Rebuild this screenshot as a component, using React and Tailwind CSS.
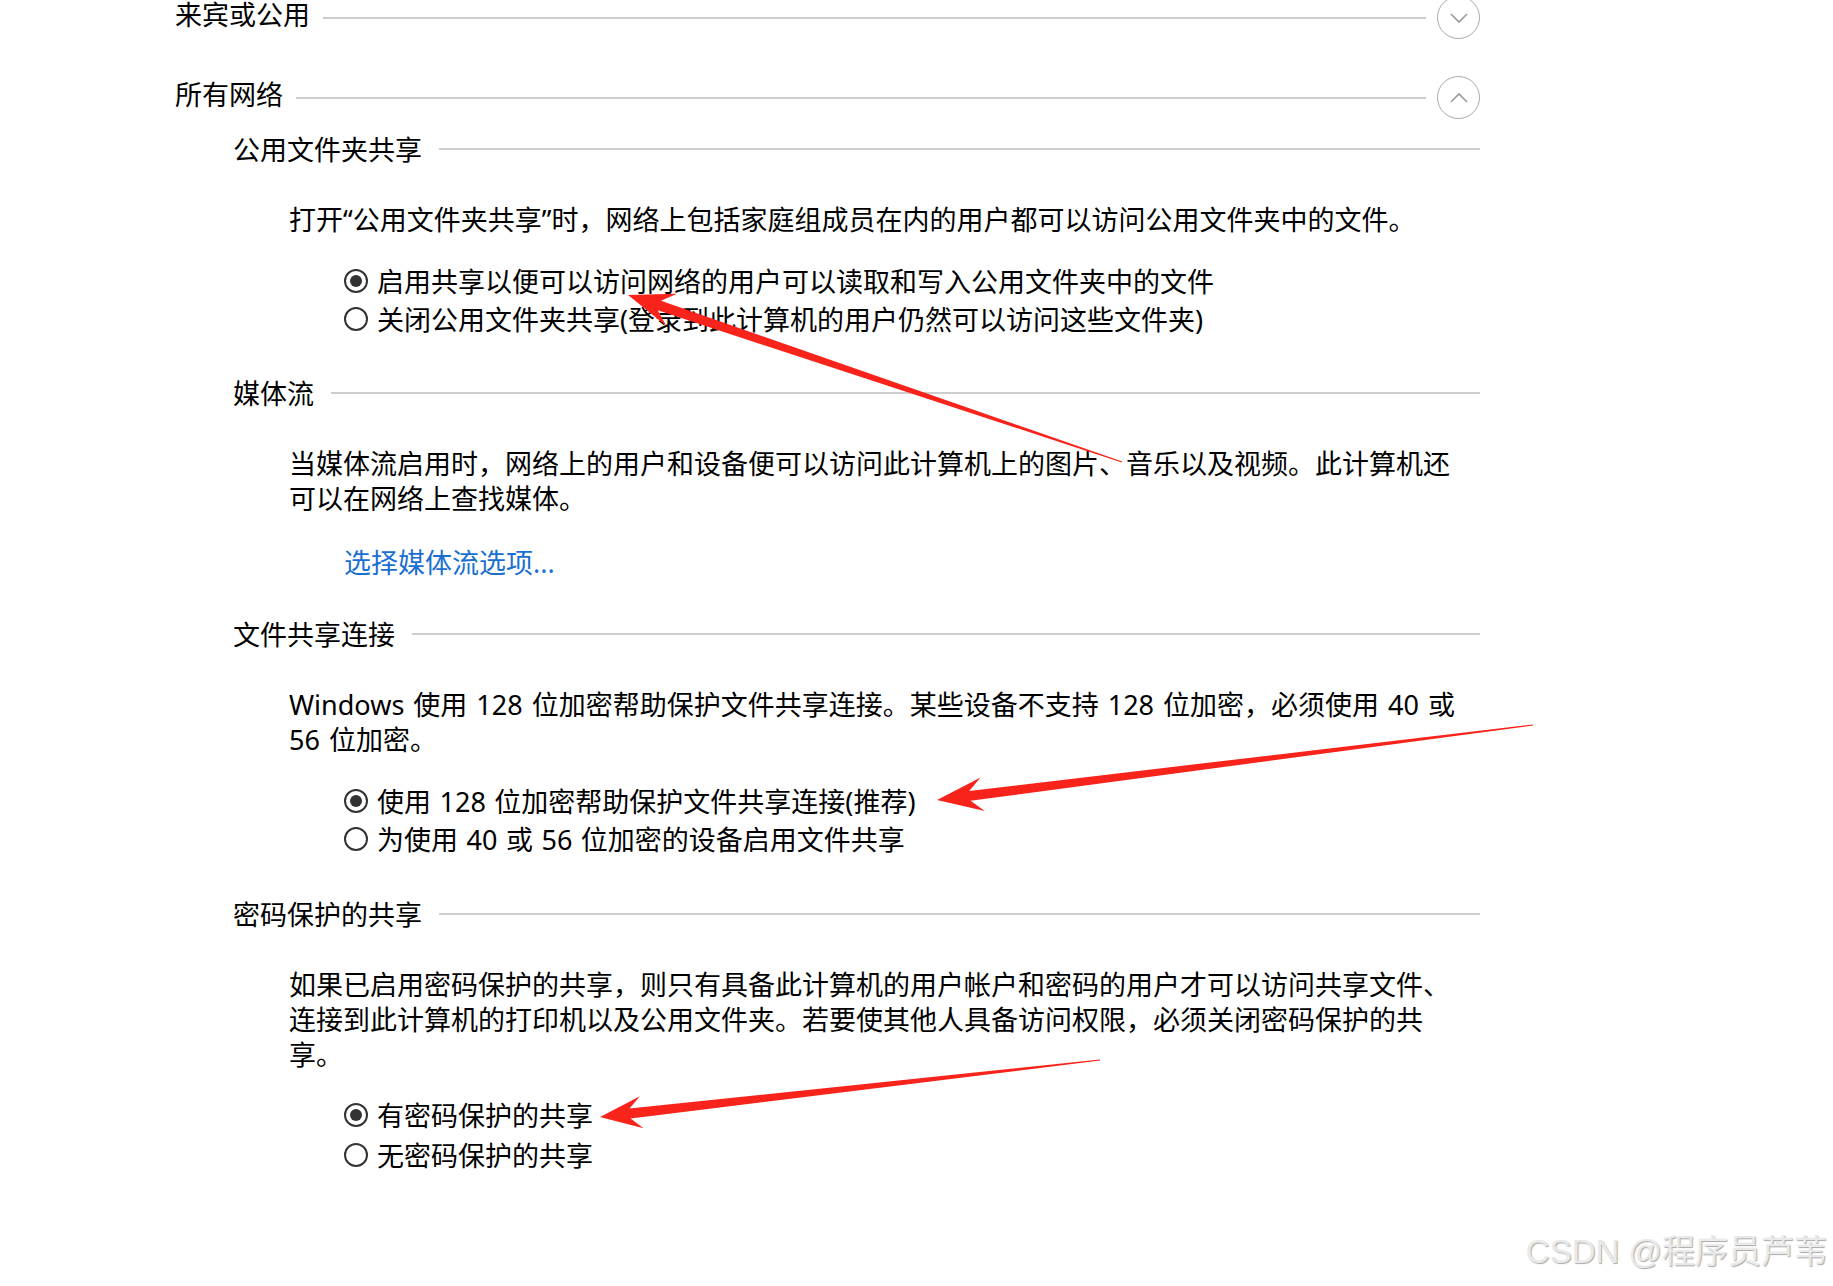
import React from "react";

// tapered red annotation arrow, tail -> tip
const Arrow = ({ tail, tip, len = 46, half = 17, neck = 5 }) => {
    const dx = tip[0] - tail[0];
    const dy = tip[1] - tail[1];
    const d = Math.hypot(dx, dy);
    const ux = dx / d, uy = dy / d;
    const nx = -uy, ny = ux;
    const at = (back, side) => [tip[0] - ux * back + nx * side, tip[1] - uy * back + ny * side];
    const pts = [
        tip,
        at(len, half),
        at(len * 0.72, neck),
        [tail[0] + nx * 0.6, tail[1] + ny * 0.6],
        [tail[0] - nx * 0.6, tail[1] - ny * 0.6],
        at(len * 0.72, -neck),
        at(len, -half),
    ];
    return <polygon points={pts.map((p) => p.join(",")).join(" ")} fill="#f8231a" />;
};

const GroupHeader = ({ title, open, className = "" }) => (
    <div className={`flex items-center h-[43px] ${className}`}>
        <span className="text-[27px] leading-[35px] -mt-[6px]">{title}</span>
        <div className="flex-1 h-[2px] bg-[#cdcdcd] ml-[13px] mr-[11px]" />
        <div className="w-[43px] h-[43px] rounded-full border border-[#a9a9a9] flex items-center justify-center">
            <svg width="20" height="12" viewBox="0 0 20 12" fill="none" stroke="#9a9a9a" strokeWidth="1.6">
                {open ? <path d="M2 10 L10 2 L18 10" /> : <path d="M2 2 L10 10 L18 2" />}
            </svg>
        </div>
    </div>
);

const SectionHeader = ({ title, className = "" }) => (
    <div className={`flex items-center h-[36px] pl-[58px] ${className}`}>
        <span className="text-[27px] leading-[36px]">{title}</span>
        <div className="flex-1 h-[2px] bg-[#cdcdcd] ml-[17px] mt-[-3px]" />
    </div>
);

const Para = ({ children, className = "" }) => (
    <p className={`pl-[114px] w-[1285px] text-[27px] leading-[35px] ${className}`}>{children}</p>
);

const Radio = ({ checked, label, tall }) => (
    <div className={`flex items-center pl-[169px] ${tall ? "h-[40px]" : "h-[38px]"}`}>
        <div className="w-[24px] h-[24px] rounded-full border-[2.5px] border-[#333] flex items-center justify-center shrink-0">
            {checked && <div className="w-[12px] h-[12px] rounded-full bg-[#333]" />}
        </div>
        <span className="ml-[9px] text-[27px] leading-[35px]">{label}</span>
    </div>
);

export default function App() {
    return (
        <div className="relative min-h-[1286px] bg-white text-black overflow-hidden [word-spacing:1.5px] font-['Noto_Sans','Noto_Sans_CJK_SC',sans-serif]">
            <div className="w-[1480px] pl-[175px]">
                <GroupHeader title="来宾或公用" className="-mt-[4px]" />
                <GroupHeader title="所有网络" open className="mt-[37px]" />

                {/* 公用文件夹共享 */}
                <SectionHeader title="公用文件夹共享" className="mt-[13px]" />
                <Para className="mt-[34px]">
                    打开“公用文件夹共享”时，网络上包括家庭组成员在内的用户都可以访问公用文件夹中的文件。
                </Para>
                <div className="mt-[25px]">
                    <Radio checked label="启用共享以便可以访问网络的用户可以读取和写入公用文件夹中的文件" />
                    <Radio label="关闭公用文件夹共享(登录到此计算机的用户仍然可以访问这些文件夹)" />
                </div>

                {/* 媒体流 */}
                <SectionHeader title="媒体流" className="mt-[38px]" />
                <Para className="mt-[34px]">
                    当媒体流启用时，网络上的用户和设备便可以访问此计算机上的图片、音乐以及视频。此计算机还可以在网络上查找媒体。
                </Para>
                <div className="mt-[29px] pl-[169px]">
                    <a href="#" className="text-[27px] leading-[35px] text-[#1a6fd0]">选择媒体流选项...</a>
                </div>

                {/* 文件共享连接 */}
                <SectionHeader title="文件共享连接" className="mt-[37px]" />
                <Para className="mt-[34px] [word-spacing:2px]">
                    Windows 使用 128 位加密帮助保护文件共享连接。某些设备不支持 128 位加密，必须使用 40 或 56 位加密。
                </Para>
                <div className="mt-[25px]">
                    <Radio checked label="使用 128 位加密帮助保护文件共享连接(推荐)" />
                    <Radio label="为使用 40 或 56 位加密的设备启用文件共享" />
                </div>

                {/* 密码保护的共享 */}
                <SectionHeader title="密码保护的共享" className="mt-[39px]" />
                <Para className="mt-[34px]">
                    如果已启用密码保护的共享，则只有具备此计算机的用户帐户和密码的用户才可以访问共享文件、连接到此计算机的打印机以及公用文件夹。若要使其他人具备访问权限，必须关闭密码保护的共享。
                </Para>
                <div className="mt-[23px]">
                    <Radio checked tall label="有密码保护的共享" />
                    <Radio tall label="无密码保护的共享" />
                </div>
            </div>

            {/* annotation arrows */}
            <svg className="absolute inset-0 pointer-events-none" width="1833" height="1286">
                <Arrow tail={[1122, 462]} tip={[628, 295]} />
                <Arrow tail={[1533, 725]} tip={[937, 800]} />
                <Arrow tail={[1100, 1060]} tip={[600, 1117]} len={42} half={16} />
            </svg>

            <div className="absolute right-[6px] bottom-[14px] text-[33px] leading-[40px] text-[#e9e9e9] [word-spacing:0px] [text-shadow:1px_1px_1px_#a9a9a9] font-['Liberation_Sans','Noto_Sans_CJK_SC',sans-serif]">
                CSDN @程序员芦苇
            </div>
        </div>
    );
}
